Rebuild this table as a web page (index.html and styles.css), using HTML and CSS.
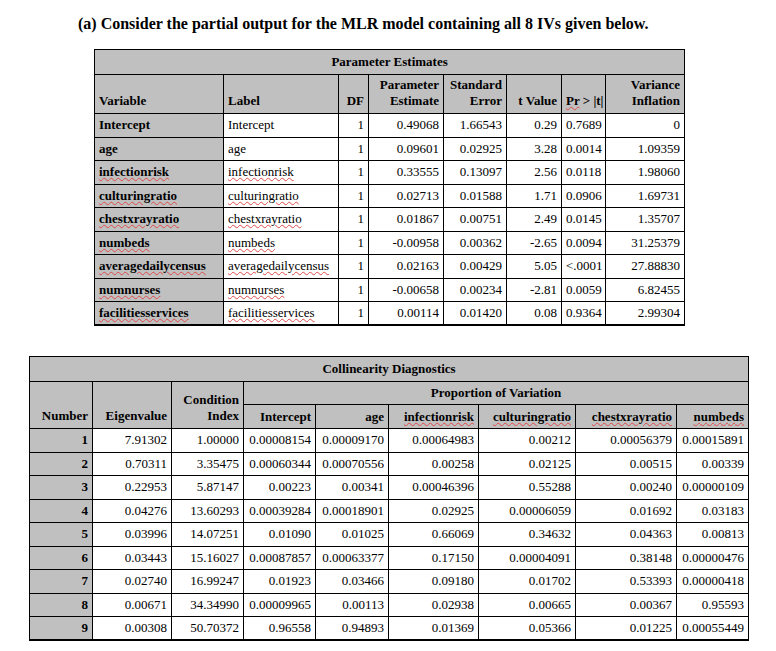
FILE: index.html
```html
<!DOCTYPE html>
<html>
<head>
<meta charset="utf-8">
<link rel="stylesheet" href="styles.css">
</head>
<body>
<p class="title">(a) Consider the partial output for the MLR model containing all 8 IVs given below.</p>

<table class="grid pe">
  <colgroup>
    <col style="width:129px"><col style="width:115px"><col style="width:30px"><col style="width:75px">
    <col style="width:63px"><col style="width:55px"><col style="width:44px"><col style="width:79px">
  </colgroup>
  <tr class="caption-row"><th colspan="8" class="c">Parameter Estimates</th></tr>
  <tr class="head-row">
    <th class="l">Variable</th><th class="l">Label</th><th>DF</th>
    <th>Parameter<br>Estimate</th><th>Standard<br>Error</th><th>t Value</th>
    <th><span class="sq">Pr</span> &gt; |t|</th><th>Variance<br>Inflation</th>
  </tr>
  <tr><th class="l rh">Intercept</th><td class="l">Intercept</td><td>1</td><td>0.49068</td><td>1.66543</td><td>0.29</td><td>0.7689</td><td>0</td></tr>
  <tr><th class="l rh">age</th><td class="l">age</td><td>1</td><td>0.09601</td><td>0.02925</td><td>3.28</td><td>0.0014</td><td>1.09359</td></tr>
  <tr><th class="l rh"><span class="sq">infectionrisk</span></th><td class="l"><span class="sq">infectionrisk</span></td><td>1</td><td>0.33555</td><td>0.13097</td><td>2.56</td><td>0.0118</td><td>1.98060</td></tr>
  <tr><th class="l rh"><span class="sq">culturingratio</span></th><td class="l"><span class="sq">culturingratio</span></td><td>1</td><td>0.02713</td><td>0.01588</td><td>1.71</td><td>0.0906</td><td>1.69731</td></tr>
  <tr><th class="l rh"><span class="sq">chestxrayratio</span></th><td class="l"><span class="sq">chestxrayratio</span></td><td>1</td><td>0.01867</td><td>0.00751</td><td>2.49</td><td>0.0145</td><td>1.35707</td></tr>
  <tr><th class="l rh"><span class="sq">numbeds</span></th><td class="l"><span class="sq">numbeds</span></td><td>1</td><td>-0.00958</td><td>0.00362</td><td>-2.65</td><td>0.0094</td><td>31.25379</td></tr>
  <tr><th class="l rh"><span class="sq">averagedailycensus</span></th><td class="l"><span class="sq">averagedailycensus</span></td><td>1</td><td>0.02163</td><td>0.00429</td><td>5.05</td><td>&lt;.0001</td><td>27.88830</td></tr>
  <tr><th class="l rh"><span class="sq">numnurses</span></th><td class="l"><span class="sq">numnurses</span></td><td>1</td><td>-0.00658</td><td>0.00234</td><td>-2.81</td><td>0.0059</td><td>6.82455</td></tr>
  <tr><th class="l rh"><span class="sq">facilitiesservices</span></th><td class="l"><span class="sq">facilitiesservices</span></td><td>1</td><td>0.00114</td><td>0.01420</td><td>0.08</td><td>0.9364</td><td>2.99304</td></tr>
</table>

<table class="grid cd">
  <colgroup>
    <col style="width:63px"><col style="width:79px"><col style="width:72px"><col style="width:72px"><col style="width:73px">
    <col style="width:90px"><col style="width:97px"><col style="width:101px"><col style="width:72px">
  </colgroup>
  <tr class="caption-row"><th colspan="9" class="c">Collinearity Diagnostics</th></tr>
  <tr class="prop-row">
    <th rowspan="2">Number</th><th rowspan="2">Eigenvalue</th><th rowspan="2">Condition<br>Index</th>
    <th colspan="6" class="c">Proportion of Variation</th>
  </tr>
  <tr class="sub-row">
    <th>Intercept</th><th>age</th><th><span class="sq">infectionrisk</span></th><th><span class="sq">culturingratio</span></th><th><span class="sq">chestxrayratio</span></th><th><span class="sq">numbeds</span></th>
  </tr>
  <tr><th class="rh">1</th><td>7.91302</td><td>1.00000</td><td>0.00008154</td><td>0.00009170</td><td>0.00064983</td><td>0.00212</td><td>0.00056379</td><td>0.00015891</td></tr>
  <tr><th class="rh">2</th><td>0.70311</td><td>3.35475</td><td>0.00060344</td><td>0.00070556</td><td>0.00258</td><td>0.02125</td><td>0.00515</td><td>0.00339</td></tr>
  <tr><th class="rh">3</th><td>0.22953</td><td>5.87147</td><td>0.00223</td><td>0.00341</td><td>0.00046396</td><td>0.55288</td><td>0.00240</td><td>0.00000109</td></tr>
  <tr><th class="rh">4</th><td>0.04276</td><td>13.60293</td><td>0.00039284</td><td>0.00018901</td><td>0.02925</td><td>0.00006059</td><td>0.01692</td><td>0.03183</td></tr>
  <tr><th class="rh">5</th><td>0.03996</td><td>14.07251</td><td>0.01090</td><td>0.01025</td><td>0.66069</td><td>0.34632</td><td>0.04363</td><td>0.00813</td></tr>
  <tr><th class="rh">6</th><td>0.03443</td><td>15.16027</td><td>0.00087857</td><td>0.00063377</td><td>0.17150</td><td>0.00004091</td><td>0.38148</td><td>0.00000476</td></tr>
  <tr><th class="rh">7</th><td>0.02740</td><td>16.99247</td><td>0.01923</td><td>0.03466</td><td>0.09180</td><td>0.01702</td><td>0.53393</td><td>0.00000418</td></tr>
  <tr><th class="rh">8</th><td>0.00671</td><td>34.34990</td><td>0.00009965</td><td>0.00113</td><td>0.02938</td><td>0.00665</td><td>0.00367</td><td>0.95593</td></tr>
  <tr><th class="rh">9</th><td>0.00308</td><td>50.70372</td><td>0.96558</td><td>0.94893</td><td>0.01369</td><td>0.05366</td><td>0.01225</td><td>0.00055449</td></tr>
</table>
</body>
</html>
```

FILE: styles.css
```css
html, body {
  margin: 0;
  padding: 0;
  background: #ffffff;
}
body {
  font-family: "Liberation Serif", "Times New Roman", serif;
  color: #000;
  padding-top: 14px;
}
.title {
  margin: 0 0 13px 78px;
  font-size: 16px;
  font-weight: bold;
  line-height: 20px;
  height: 22px;
}
.grid {
  border-collapse: collapse;
  table-layout: fixed;
  font-size: 13px;
  line-height: 16px;
  border: 1px solid #000;
  border-bottom: 2px solid #000;
}
.grid td, .grid th {
  border: 1px solid #000;
  padding: 0 4px 0 4px;
  text-align: right;
  white-space: nowrap;
  overflow: hidden;
}
.grid th {
  background: #c0c0c0;
  font-weight: bold;
}
.grid td {
  background: #fff;
  font-weight: normal;
}
.grid tr {
  height: 23.5px;
}
.grid .l { text-align: left; }
.grid .c { text-align: center; }
.grid .caption-row { height: 25px; }
.caption-row th { vertical-align: middle; }
.grid .head-row { height: 39px; }
.head-row th { vertical-align: bottom; padding-bottom: 4px; }
.sq {
  text-decoration-line: underline;
  text-decoration-style: wavy;
  text-decoration-color: #e04a4a;
  text-decoration-thickness: 1px;
  text-underline-offset: 1px;
}
.pe {
  margin-left: 94px;
  width: 591px;
}
.cd {
  margin-top: 30px;
  margin-left: 29px;
  width: 720px;
}
.cd tr { height: 23.5px; }
.cd .caption-row { height: 25px; }
.cd .prop-row { height: 23px; }
.prop-row th[rowspan] { vertical-align: bottom; padding-bottom: 4px; }
.cd .sub-row { height: 24px; }
.sub-row th { vertical-align: middle; }
```
